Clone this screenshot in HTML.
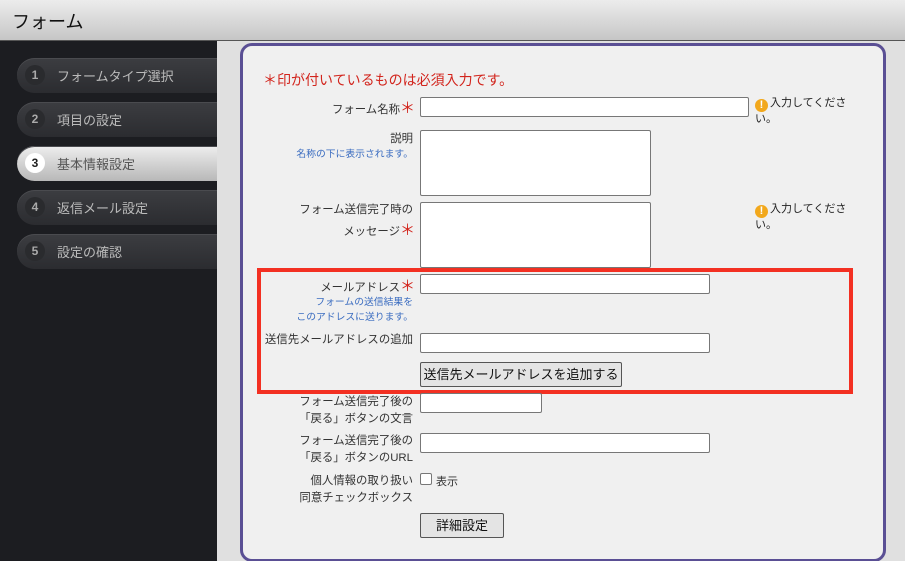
<!DOCTYPE html>
<html><head><meta charset="utf-8"><style>
*{box-sizing:border-box;margin:0;padding:0}
html,body{width:905px;height:561px;overflow:hidden}
body{background:#e0e0e0;font-family:"Liberation Sans","Noto Sans CJK JP",sans-serif;position:relative;color:#333}
.hdr{position:absolute;left:0;top:0;width:905px;height:41px;background:linear-gradient(#ececec,#c6c6c6);border-bottom:1px solid #555}
.hdr span{position:absolute;left:12px;top:8px;font-size:18px;color:#111}
.side{position:absolute;left:0;top:41px;width:217px;height:520px;background:#1c1d21}
.nav{position:absolute;left:17px;width:200px;height:35px;border-radius:18px 0 0 18px;background:linear-gradient(#3c3d41,#2b2c30);box-shadow:inset 0 1px 0 #4a4b4f;color:#bbb;font-size:13px}
.nav b{position:absolute;left:8px;top:7px;width:20px;height:20px;border-radius:50%;background:#2a2b2e;color:#aaa;font-size:12px;text-align:center;line-height:20px}
.nav span{position:absolute;left:40px;top:8px}
.nav.act{background:linear-gradient(#eee,#b8b8b8);color:#555}
.nav.act b{background:#fff;color:#222}
.panel{position:absolute;left:240px;top:43px;width:646px;height:519px;border:3px solid #5a4f94;border-radius:12px;background:#f0f0f0}
.a{position:absolute;white-space:nowrap}
.l{font-size:11.4px;color:#333;text-align:right;right:492px}
.n{font-size:9.8px;color:#3a6cc0;text-align:right;right:492px}
.r{color:#d2241c}
.in{position:absolute;background:#fff;border:1px solid #777;border-radius:2px}
.btn{position:absolute;background:#e4e4e4;border:1px solid #555;border-radius:2px;font-size:13px;text-align:center;color:#111;white-space:nowrap}
.w{font-size:11px;color:#222;line-height:14px}
.w i{display:inline-block;width:13px;height:13px;border-radius:50%;background:#f2a81c;color:#fff;font-style:normal;font-weight:bold;font-size:11px;text-align:center;line-height:13px;vertical-align:-2px;margin-right:2px}
</style></head><body>
<div class="hdr"><span>フォーム</span></div>
<div class="side">
<div class="nav" style="top:17px"><b>1</b><span>フォームタイプ選択</span></div>
<div class="nav" style="top:61px"><b>2</b><span>項目の設定</span></div>
<div class="nav act" style="top:105px"><b>3</b><span>基本情報設定</span></div>
<div class="nav" style="top:149px"><b>4</b><span>返信メール設定</span></div>
<div class="nav" style="top:193px"><b>5</b><span>設定の確認</span></div>
</div>
<div class="panel"></div>
<div class="a r" style="left:263px;top:70px;font-size:14px">＊印が付いているものは必須入力です。</div>
<div class="a l" style="top:97px;right:490px">フォーム名称<span class="r" style="font-size:15px">＊</span></div>
<div class="in" style="left:420px;top:97px;width:329px;height:20px"></div>
<div class="a w" style="left:755px;top:96px"><i>!</i>入力してくださ<br>い。</div>
<div class="a l" style="top:130px">説明</div>
<div class="a n" style="top:146px">名称の下に表示されます。</div>
<div class="in" style="left:420px;top:130px;width:231px;height:66px"></div>
<div class="a l" style="top:201px">フォーム送信完了時の</div>
<div class="a l" style="top:219px;right:490px">メッセージ<span class="r" style="font-size:15px">＊</span></div>
<div class="in" style="left:420px;top:202px;width:231px;height:66px"></div>
<div class="a w" style="left:755px;top:202px"><i>!</i>入力してくださ<br>い。</div>
<div class="a" style="left:257px;top:268px;width:596px;height:126px;border:4px solid #f33022"></div>
<div class="a l" style="top:275px;right:490px">メールアドレス<span class="r" style="font-size:15px">＊</span></div>
<div class="a n" style="top:294px">フォームの送信結果を</div>
<div class="a n" style="top:309px">このアドレスに送ります。</div>
<div class="in" style="left:420px;top:274px;width:290px;height:20px"></div>
<div class="a l" style="top:331px">送信先メールアドレスの追加</div>
<div class="in" style="left:420px;top:333px;width:290px;height:20px"></div>
<div class="btn" style="left:420px;top:362px;width:202px;height:25px;line-height:23px">送信先メールアドレスを追加する</div>
<div class="a l" style="top:393px">フォーム送信完了後の</div>
<div class="a l" style="top:410px">「戻る」ボタンの文言</div>
<div class="in" style="left:420px;top:393px;width:122px;height:20px"></div>
<div class="a l" style="top:432px">フォーム送信完了後の</div>
<div class="a l" style="top:449px">「戻る」ボタンのURL</div>
<div class="in" style="left:420px;top:433px;width:290px;height:20px"></div>
<div class="a l" style="top:472px">個人情報の取り扱い</div>
<div class="a l" style="top:489px">同意チェックボックス</div>
<div class="in" style="left:420px;top:473px;width:12px;height:12px;border-radius:2px"></div>
<div class="a" style="left:436px;top:473px;font-size:11px">表示</div>
<div class="btn" style="left:420px;top:513px;width:84px;height:25px;line-height:23px">詳細設定</div>
</body></html>
